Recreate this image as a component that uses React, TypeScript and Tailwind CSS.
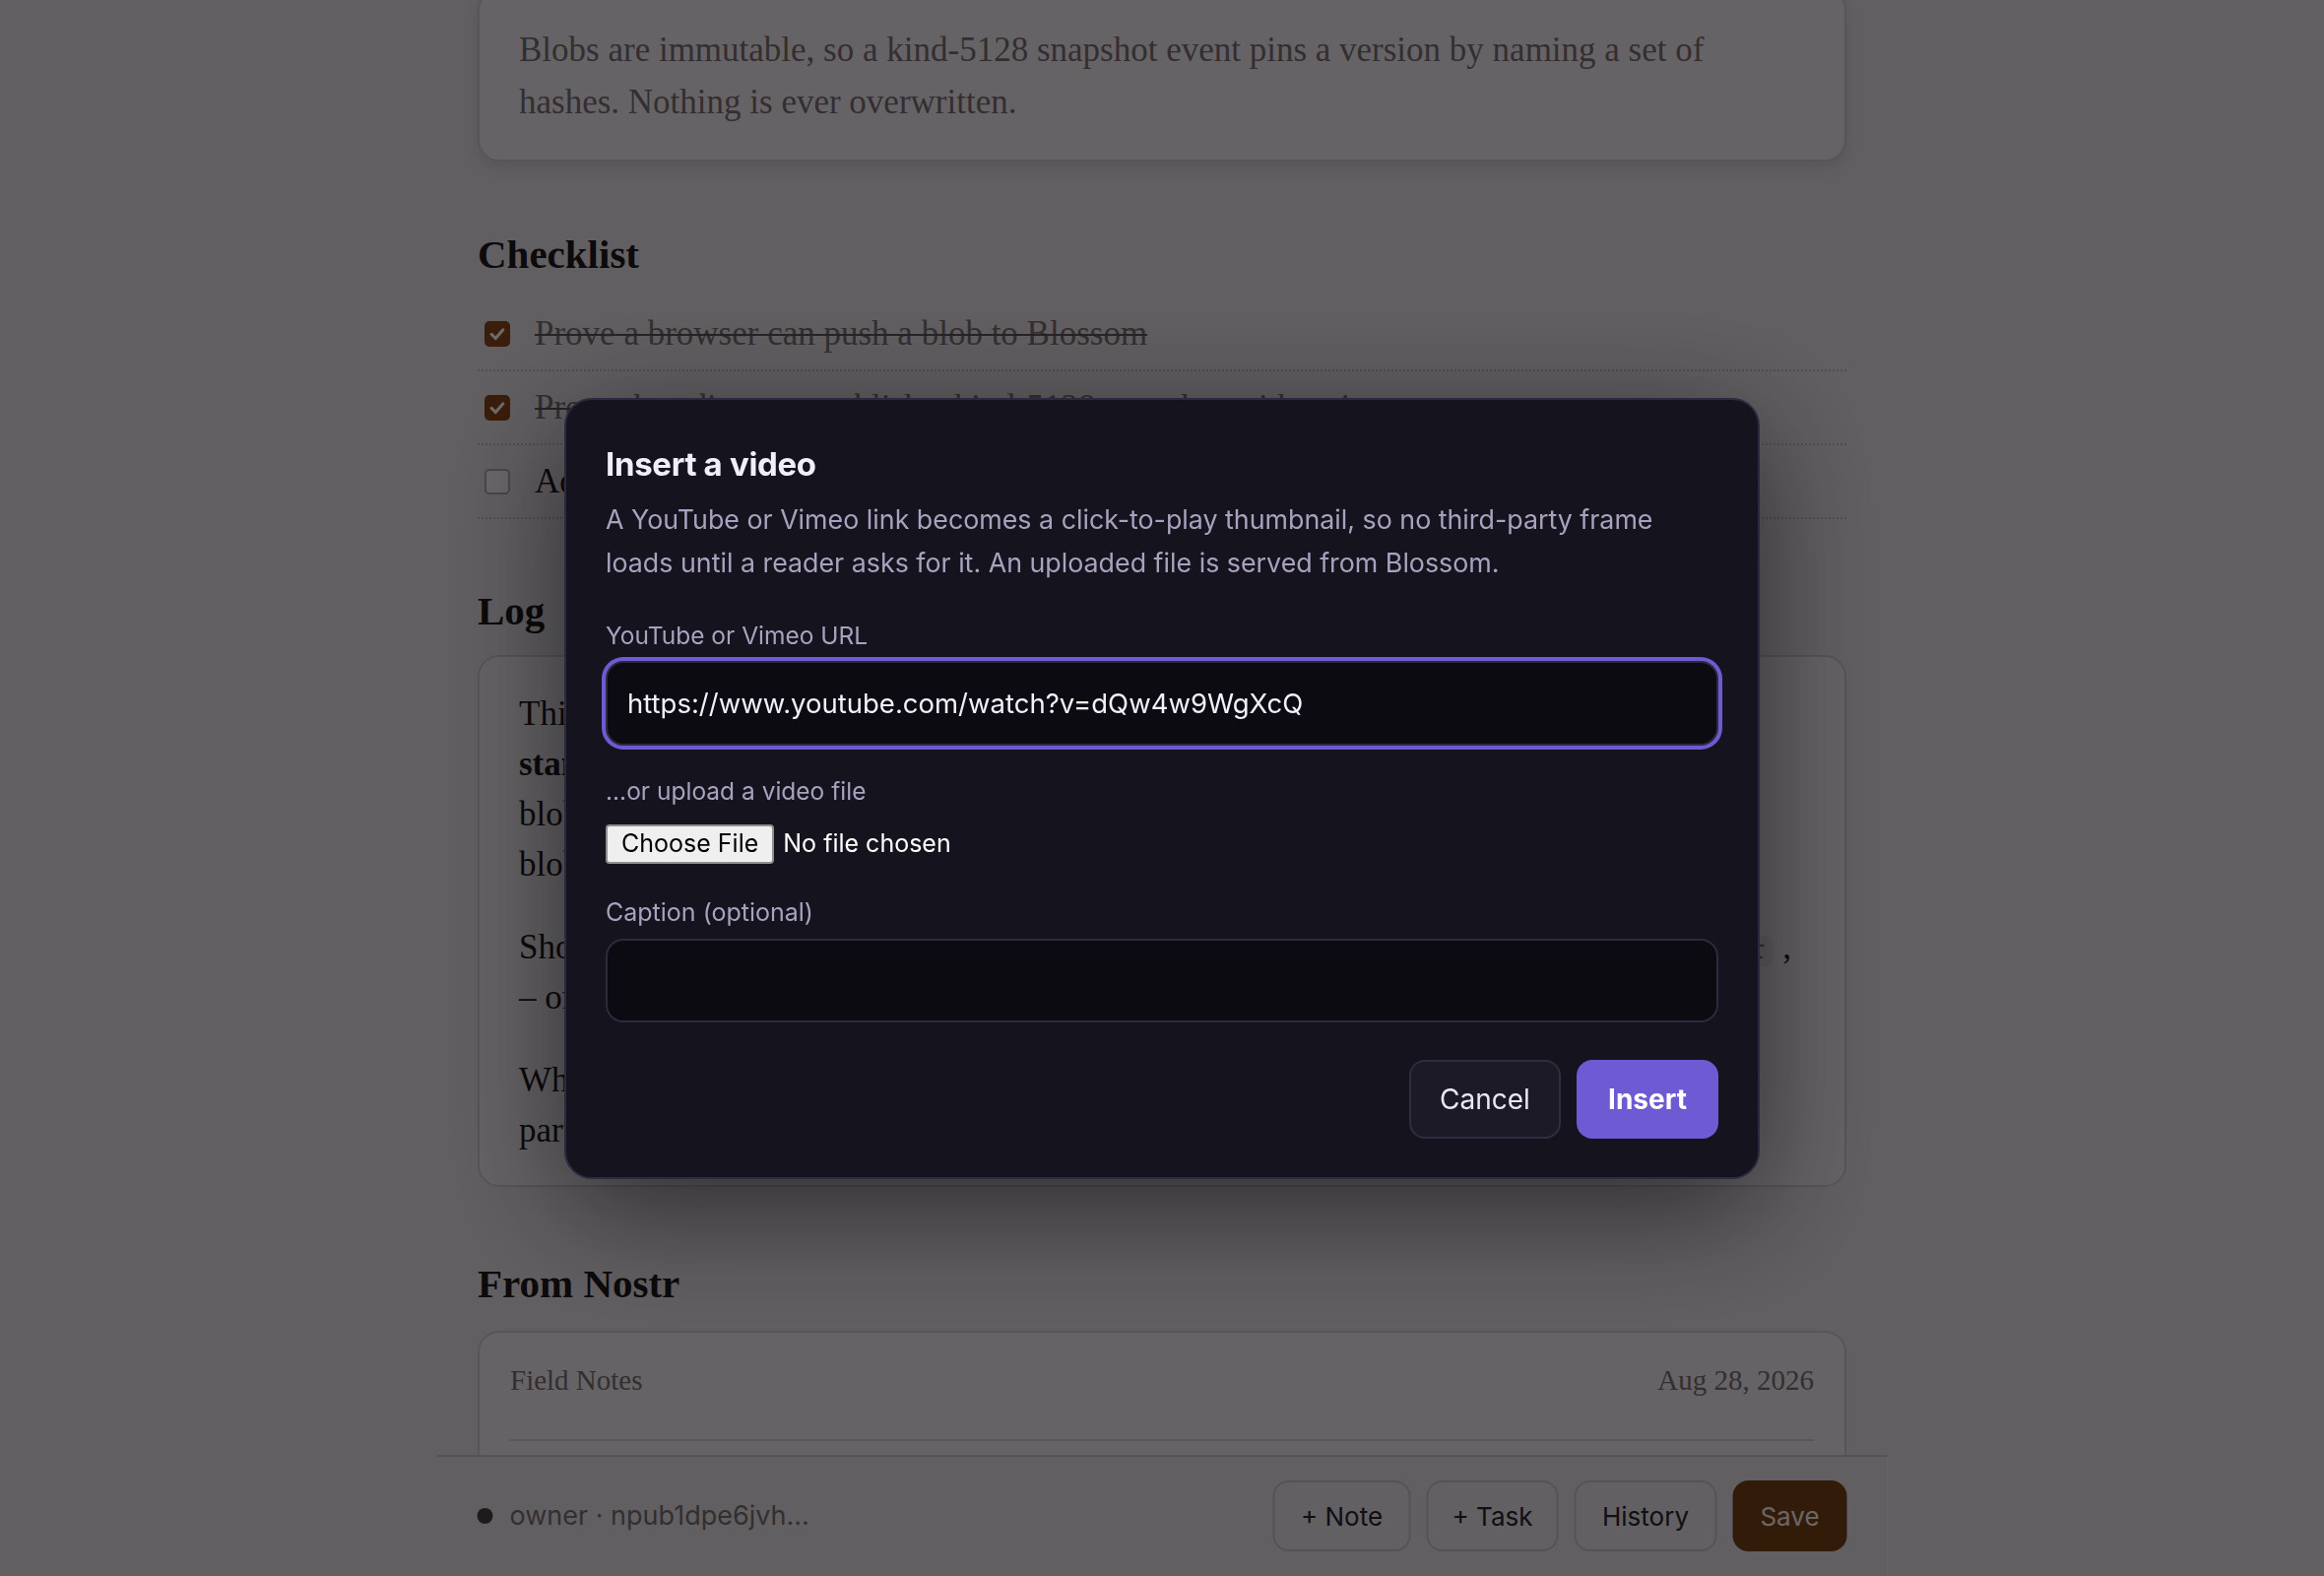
import React from "react";

function CheckIcon() {
  return (
    <svg viewBox="0 0 24 24" className="h-[20px] w-[20px]" fill="none" stroke="#ffffff" strokeWidth="3.6" strokeLinecap="round" strokeLinejoin="round">
      <polyline points="5,12.5 10,17.5 19,7" />
    </svg>
  );
}

function CheckRow({ done, children }: { done: boolean; children: React.ReactNode }) {
  return (
    <li className="flex h-[75px] items-center gap-[25px] border-b-2 border-dotted border-[#c4bbc1] pl-[7px]">
      {done ? (
        <span className="flex h-[26px] w-[26px] shrink-0 items-center justify-center rounded-[5px] bg-[#8a4518]">
          <CheckIcon />
        </span>
      ) : (
        <span className="h-[26px] w-[26px] shrink-0 rounded-[5px] border-2 border-[#b3a9ae] bg-[#fcf5fc]" />
      )}
      <span
        className={
          done
            ? "text-[35px] leading-[44px] text-[#7d6f73] line-through decoration-[#5f5458] decoration-2"
            : "text-[35px] leading-[44px] text-[#1d181a]"
        }
      >
        {children}
      </span>
    </li>
  );
}

function FooterButton({ width, children }: { width: string; children: React.ReactNode }) {
  return (
    <button className={`h-[72px] ${width} rounded-[16px] border-2 border-[#cdc5ca] bg-[#ece5ec] text-[26px] text-[#2a2529]`}>
      {children}
    </button>
  );
}

export default function App() {
  return (
    <div className="relative h-[1600px] w-full overflow-hidden bg-[#e9e2e9]">
      <main className="mx-auto -mt-[12px] w-[1390px] font-['Liberation_Serif',serif]">
        <section className="rounded-[22px] border-2 border-[#d2cacf] bg-[#f3ecf3] px-[40px] pt-[34px] pb-[32px] shadow-[0_6px_14px_rgba(0,0,0,0.10)]">
          <p className="max-w-[1262px] text-[35px] leading-[53px] text-[#7d6f73]">
            Blobs are immutable, so a kind-5128 snapshot event pins a version by naming a set of hashes. Nothing is ever overwritten.
          </p>
        </section>

        <h2 className="mt-[72px] text-[41px] leading-[44px] font-bold text-[#1d181a]">Checklist</h2>
        <ul className="mt-[22px]">
          <CheckRow done>Prove a browser can push a blob to Blossom</CheckRow>
          <CheckRow done>Prove the editor can publish a kind-5128 snapshot with a signer</CheckRow>
          <CheckRow done={false}>Add a video block with a click-to-play thumbnail</CheckRow>
        </ul>

        <h2 className="mt-[71px] text-[41px] leading-[44px] font-bold text-[#1d181a]">Log</h2>
        <section className="mt-[23px] rounded-[22px] border-2 border-[#d2cacf] bg-[#f3ecf3] px-[40px] pt-[32px] pb-[30px] text-[35px] leading-[51px] text-[#1d181a]">
          <p>
            This started as a weekend spike to see if a notebook could run on
            <br />
            <strong>standalone</strong> Nostr keys and a Blossom server, with no database behind it.
            <br />
            blob is addressed by its SHA-256 hash, and the editor keeps a list of
            <br />
            blobs so a snapshot can be rebuilt from any server that holds them.
          </p>
          <p className="mt-[33px]">
            Shortcuts so far: Ctrl+B for bold, Ctrl+I for italic, Ctrl+K for links, and a slash{" "}
            <code className="rounded-[6px] bg-[#e7dfe6] pl-[15px] pr-[8px] font-['Liberation_Mono',monospace] text-[26px] leading-none italic text-[#6f6468]">/snapshot</code>{" "}
            ,
            <br />– one keystroke each, so the toolbar can stay hidden.
          </p>
          <p className="mt-[33px]">
            When a server is unreachable the upload falls back to the next one in the
            <br />
            party list, and the note records which servers acknowledged each blob.
          </p>
        </section>

        <h2 className="mt-[76px] text-[41px] leading-[44px] font-bold text-[#1d181a]">From Nostr</h2>
        <section className="mt-[26px] h-[400px] rounded-t-[22px] border-2 border-b-0 border-[#d2cacf] bg-[#f3ecf3] px-[31px] pt-[30px]">
          <div className="flex items-center justify-between border-b-2 border-[#d2cacf] pb-[42px] text-[29px] leading-[36px] text-[#7d6f73]">
            <span>Field Notes</span>
            <span>Aug 28, 2026</span>
          </div>
        </section>
      </main>

      <footer className="fixed bottom-0 left-1/2 h-[123px] w-[1473px] -translate-x-1/2 border-t-2 border-[#cdc5ca] bg-[#e9e2e9] px-[41px] pt-[24px] font-['Inter',sans-serif]">
        <div className="flex h-[72px] items-center justify-between">
          <div className="flex items-center gap-[17px]">
            <span className="h-[16px] w-[16px] rounded-full bg-[#4a4246]" />
            <span className="text-[27px] text-[#7d6f73]">owner · npub1dpe6jvh...</span>
          </div>
          <div className="flex items-center gap-[16px]">
            <FooterButton width="w-[140px]">+ Note</FooterButton>
            <FooterButton width="w-[134px]">+ Task</FooterButton>
            <FooterButton width="w-[145px]">History</FooterButton>
            <button className="h-[72px] w-[116px] rounded-[16px] bg-[#794018] text-[26px] text-[#fbf6f0]">Save</button>
          </div>
        </div>
      </footer>

      <div className="fixed inset-0 z-50 flex items-center justify-center bg-black/[0.58]">
        <div className="w-[1214px] rounded-[28px] border-2 border-[#2c2940] bg-[#15131e] px-[40px] pt-[43px] pb-[39px] font-['Inter',sans-serif] shadow-[0_30px_120px_rgba(0,0,0,0.55)]">
          <h3 className="text-[33px] leading-[44px] font-bold tracking-[-0.01em] text-[#f0eef8]">Insert a video</h3>
          <p className="mt-[12px] max-w-[1100px] text-[26.8px] leading-[44px] text-[#a8a2bf]">
            A YouTube or Vimeo link becomes a click-to-play thumbnail, so no third-party frame loads until a reader asks for it. An uploaded file is served from Blossom.
          </p>

          <label className="mt-[34px] block text-[24.5px] leading-[36px] text-[#a8a2bf]">YouTube or Vimeo URL</label>
          <input
            readOnly
            value="https://www.youtube.com/watch?v=dQw4w9WgXcQ"
            className="mt-[8px] block h-[86px] w-full rounded-[18px] border-2 border-[#2d2a3d] bg-[#0c0b12] px-[20px] text-[27.5px] text-[#f2f0fa] shadow-[0_0_0_4px_#6e5bd3] outline-none"
          />

          <div className="mt-[28px] text-[24.5px] leading-[36px] text-[#a8a2bf]">...or upload a video file</div>
          <div className="mt-[16px] flex items-center gap-[9px]">
            <span className="flex h-[40px] items-center rounded-[4px] border-2 border-[#8f8f8f] bg-[#efefef] px-[14px] text-[25px] text-black">Choose File</span>
            <span className="text-[25px] text-white">No file chosen</span>
          </div>

          <label className="mt-[31px] block text-[25px] leading-[36px] text-[#a8a2bf]">Caption (optional)</label>
          <input
            readOnly
            value=""
            className="mt-[9px] block h-[85px] w-full rounded-[18px] border-2 border-[#2d2a3d] bg-[#0c0b12] px-[20px] text-[28px] text-[#f2f0fa] outline-none"
          />

          <div className="mt-[38px] flex justify-end gap-[16px]">
            <button className="h-[80px] w-[154px] rounded-[16px] border-2 border-[#302d40] bg-[#1c1a26] text-[28px] text-[#e9e7f1]">Cancel</button>
            <button className="h-[80px] w-[144px] rounded-[16px] bg-[#6e5ad2] text-[28px] font-bold text-white">Insert</button>
          </div>
        </div>
      </div>
    </div>
  );
}
